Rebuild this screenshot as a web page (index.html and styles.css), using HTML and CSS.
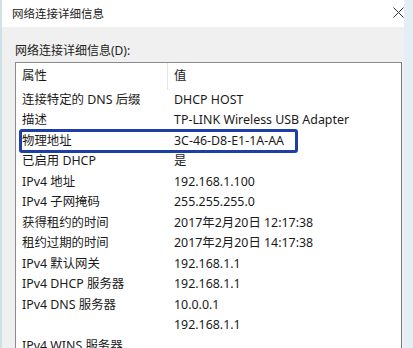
FILE: index.html
```html
<!DOCTYPE html>
<html lang="zh-CN">
<head>
<meta charset="utf-8">
<title>网络连接详细信息</title>
<link rel="stylesheet" href="styles.css">
</head>
<body>
<div class="window">
  <div class="titlebar">
    <span class="title">网络连接详细信息</span>
    <svg class="close" width="11" height="11" viewBox="0 0 11 11"><path d="M0.5 0.5 L10.5 10.5 M10.5 0.5 L0.5 10.5" stroke="#333" stroke-width="1" fill="none"/></svg>
  </div>
  <div class="content">
    <div class="label">网络连接详细信息(D):</div>
    <div class="list">
      <div class="row head"><span class="c1">属性</span><span class="c2">值</span></div>
      <div class="row"><span class="c1">连接特定的 DNS 后缀</span><span class="c2">DHCP HOST</span></div>
      <div class="row"><span class="c1">描述</span><span class="c2">TP-LINK Wireless USB Adapter</span></div>
      <div class="row"><span class="c1">物理地址</span><span class="c2">3C-46-D8-E1-1A-AA</span><span class="mark"></span></div>
      <div class="row"><span class="c1">已启用 DHCP</span><span class="c2">是</span></div>
      <div class="row"><span class="c1">IPv4 地址</span><span class="c2">192.168.1.100</span></div>
      <div class="row"><span class="c1">IPv4 子网掩码</span><span class="c2">255.255.255.0</span></div>
      <div class="row"><span class="c1">获得租约的时间</span><span class="c2">2017年2月20日 12:17:38</span></div>
      <div class="row"><span class="c1">租约过期的时间</span><span class="c2">2017年2月20日 14:17:38</span></div>
      <div class="row"><span class="c1">IPv4 默认网关</span><span class="c2">192.168.1.1</span></div>
      <div class="row"><span class="c1">IPv4 DHCP 服务器</span><span class="c2">192.168.1.1</span></div>
      <div class="row"><span class="c1">IPv4 DNS 服务器</span><span class="c2">10.0.0.1</span></div>
      <div class="row"><span class="c1"></span><span class="c2">192.168.1.1</span></div>
      <div class="row"><span class="c1">IPv4 WINS 服务器</span><span class="c2"></span></div>
    </div>
  </div>
</div>
</body>
</html>
```
FILE: styles.css
```css
html, body {
  margin: 0;
  padding: 0;
  height: 100%;
  overflow: hidden;
  background: #e4eef6;
  font-family: "Noto Sans", "Noto Sans CJK SC", sans-serif;
  color: #1a1a1a;
  font-size: 12px;
}
.window {
  width: 404px;
  height: 348px;
  display: flex;
  flex-direction: column;
  border-left: 2px solid #cfe0e6;
  box-sizing: border-box;
  overflow: hidden;
}
.titlebar {
  height: 27px;
  flex: none;
  background: #ffffff;
  display: flex;
  align-items: center;
  justify-content: space-between;
  padding: 0 9px 2px 10px;
  width: 411px;
  box-sizing: border-box;
}
.title {
  font-size: 11.5px;
  color: #222;
}
.close {
  display: block;
}
.content {
  flex: 1;
  background: #f0f0f0;
  padding: 16px 0 0 13px;
  display: flex;
  flex-direction: column;
}
.label {
  height: 16px;
  line-height: 16px;
  font-size: 12px;
  color: #222;
  margin-bottom: 3px;
}
.list {
  width: 387px;
  flex: 1;
  background: #fff;
  border: 1px solid #8a8a8a;
  border-right-color: #7a7a7a;
  border-bottom: none;
  box-sizing: border-box;
  font-size: 12.4px;
}
.row {
  position: relative;
  display: flex;
  height: 20.5px;
  line-height: 16px;
  align-items: center;
}
.row.head {
  height: 26.5px;
}
.c1 {
  width: 152px;
  padding-left: 6px;
  white-space: nowrap;
  flex: none;
  box-sizing: content-box;
}
.c2 {
  white-space: nowrap;
}
.head .c1 {
  align-self: stretch;
  display: flex;
  align-items: center;
  border-right: 1px solid #e4e4e4;
  width: 145px;
  margin-right: 6px;
}
.mark {
  position: absolute;
  left: 3px;
  top: -2px;
  width: 279px;
  height: 24px;
  border: 3px solid #1d3fa5;
  border-radius: 3px;
  box-sizing: border-box;
}
```
